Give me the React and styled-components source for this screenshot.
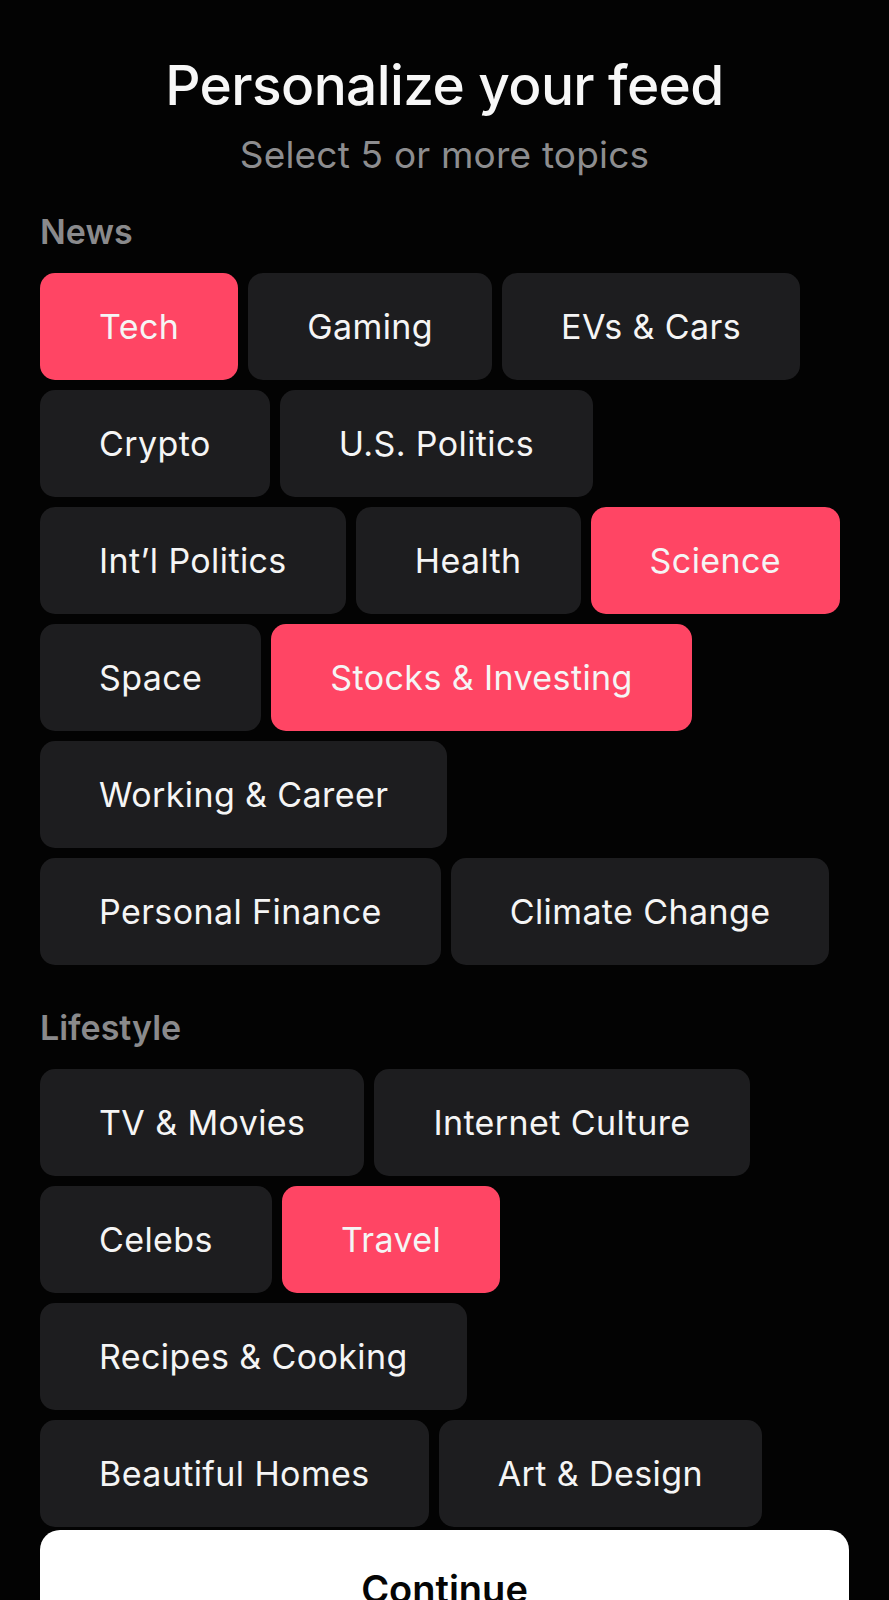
import React from 'react'
import styled, { createGlobalStyle } from 'styled-components'

const GlobalStyle = createGlobalStyle`
    html, body {
        margin: 0;
        padding: 0;
        background: #030303;
    }
    body {
        font-family: Inter, "Noto Sans", "Liberation Sans", sans-serif;
        -webkit-font-smoothing: antialiased;
    }
`

const Page = styled.div`
    min-height: 1600px;
    padding: 52px 40px 120px;
    box-sizing: border-box;
    color: #fff;
`

const Header = styled.header`
    display: flex;
    flex-direction: column;
    align-items: center;
    gap: 14px;
`

const Title = styled.h1`
    margin: 0;
    font-size: 55px;
    line-height: 66px;
    font-weight: 500;
    letter-spacing: -0.6px;
    color: #f7f7f7;
`

const Subtitle = styled.p`
    margin: 0;
    font-size: 37px;
    line-height: 45px;
    font-weight: 400;
    letter-spacing: 0.2px;
    color: #8d8d8f;
`

const Section = styled.section`
    margin-top: ${props => props.first ? '34px' : '42px'};
`

const Label = styled.h2`
    margin: 0 0 21px;
    font-size: 34px;
    line-height: 41px;
    font-weight: 600;
    color: #8a8a8c;
`

const Chips = styled.div`
    display: flex;
    flex-wrap: wrap;
    gap: 10px;
`

const Chip = styled.button`
    height: 107px;
    padding: 0 59px;
    border: none;
    border-radius: 15px;
    background: ${props => props.selected ? '#ff4564' : '#1d1d1f'};
    color: #f5f5f5;
    font-family: inherit;
    font-size: 34px;
    font-weight: 400;
    letter-spacing: 0.4px;
    white-space: nowrap;
    cursor: pointer;
`

const ContinueButton = styled.button`
    position: fixed;
    left: 40px;
    right: 40px;
    bottom: -48px;
    height: 118px;
    border: none;
    border-radius: 20px;
    background: #ffffff;
    color: #050505;
    font-family: inherit;
    font-size: 38px;
    font-weight: 600;
`

const sections = [
    {
        name: 'News',
        topics: [
            ['Tech', true],
            ['Gaming'],
            ['EVs & Cars'],
            ['Crypto'],
            ['U.S. Politics'],
            ['Int’l Politics'],
            ['Health'],
            ['Science', true],
            ['Space'],
            ['Stocks & Investing', true],
            ['Working & Career'],
            ['Personal Finance'],
            ['Climate Change'],
        ],
    },
    {
        name: 'Lifestyle',
        topics: [
            ['TV & Movies'],
            ['Internet Culture'],
            ['Celebs'],
            ['Travel', true],
            ['Recipes & Cooking'],
            ['Beautiful Homes'],
            ['Art & Design'],
        ],
    },
]

export default function App() {
    return (
        <Page>
            <GlobalStyle />
            <Header>
                <Title>Personalize your feed</Title>
                <Subtitle>Select 5 or more topics</Subtitle>
            </Header>
            {sections.map((section, i) => (
                <Section key={section.name} first={i === 0}>
                    <Label>{section.name}</Label>
                    <Chips>
                        {section.topics.map(([topic, selected]) => (
                            <Chip key={topic} selected={selected}>
                                {topic}
                            </Chip>
                        ))}
                    </Chips>
                </Section>
            ))}
            <ContinueButton>Continue</ContinueButton>
        </Page>
    )
}
